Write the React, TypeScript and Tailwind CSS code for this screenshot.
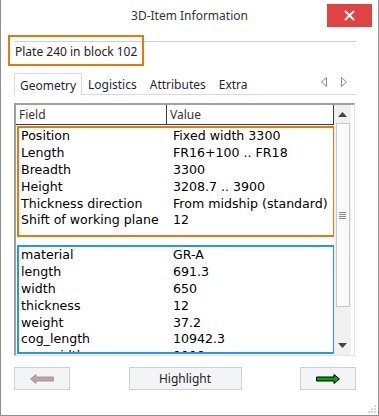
import React from "react";

const geo: [string, string][] = [
  ["Position", "Fixed width 3300"],
  ["Length", "FR16+100 .. FR18"],
  ["Breadth", "3300"],
  ["Height", "3208.7 .. 3900"],
  ["Thickness direction", "From midship (standard)"],
  ["Shift of working plane", "12"],
];

const attrs: [string, string][] = [
  ["material", "GR-A"],
  ["length", "691.3"],
  ["width", "650"],
  ["thickness", "12"],
  ["weight", "37.2"],
  ["cog_length", "10942.3"],
  ["cog_width", "9998"],
];

function Row({ f, v }: { f: string; v: string }) {
  return (
    <div className="flex h-[16.8px] shrink-0 items-center leading-[16px] whitespace-nowrap">
      <div className="w-[154px] pl-[2px]">{f}</div>
      <div>{v}</div>
    </div>
  );
}

export default function App() {
  const ui = { fontFamily: '"Noto Sans", "Open Sans", sans-serif' };
  const list = { fontFamily: '"DejaVu Sans", Verdana, sans-serif' };
  return (
    <div
      className="relative flex h-[416px] w-[379px] flex-col border-x border-b border-[#8e8e8e] bg-white text-[#1f1f3a]"
      style={ui}
    >
      {/* title bar */}
      <div className="relative flex h-[41px] shrink-0 items-start justify-center pt-[7px] text-[12px] leading-[18px] text-[#333]">
        3D-Item Information
        <div className="absolute right-[6px] top-[4px] flex h-[23px] w-[45px] items-center justify-center bg-[#e04343]">
          <svg width="11" height="11" viewBox="0 0 11 11">
            <path d="M1 1 L10 10 M10 1 L1 10" stroke="#fff" strokeWidth="2" />
          </svg>
        </div>
      </div>

      {/* header group */}
      <div className="ml-[13px] w-[342px] border-t border-[#d0d0d0] pt-[2px]">
        <div className="pl-[1px] text-[12px] leading-[16px] text-[#222]">Plate 240 in block 102</div>
      </div>
      <div className="absolute left-[7px] top-[35px] h-[31px] w-[136px] border-2 border-[#e8780c]" />

      {/* tabs */}
      <div className="ml-[13px] mt-[13px] flex h-[22px] w-[342px] items-end border-b border-[#dadada] text-[12px] leading-[16px]">
        <div className="relative -mb-[1px] flex h-[22px] w-[68px] items-center justify-center border-x border-t border-[#dadada] bg-white pt-[2px]">
          Geometry
        </div>
        <div className="ml-[6px] flex h-[21px] items-center pt-[2px]">Logistics</div>
        <div className="ml-[13px] flex h-[21px] items-center pt-[2px]">Attributes</div>
        <div className="ml-[13px] flex h-[21px] items-center pt-[2px]">Extra</div>
        <div className="ml-auto mr-[9px] flex h-[21px] items-start gap-[14px] pt-[4px]">
          <svg width="6" height="10" viewBox="0 0 6 10">
            <path d="M5.5 0.5 L0.5 5 L5.5 9.5 Z" fill="none" stroke="#8a8a8a" strokeWidth="1" />
          </svg>
          <svg width="6" height="10" viewBox="0 0 6 10">
            <path d="M0.5 0.5 L5.5 5 L0.5 9.5 Z" fill="none" stroke="#8a8a8a" strokeWidth="1" />
          </svg>
        </div>
      </div>

      {/* list view */}
      <div className="ml-[13px] mt-[8px] flex h-[253px] w-[341px] border-l-2 border-t-2 border-[#a0a0a0] border-r border-b border-r-[#e3e3e3] border-b-[#e3e3e3]">
        <div className="flex w-[318px] flex-col overflow-hidden text-[12.6px] text-black" style={list}>
          <div
            className="flex h-[20px] shrink-0 border-b border-r border-[#3a3a3a] text-[12px] leading-[19px] text-[#333]"
            style={ui}
          >
            <div className="w-[151px] border-r border-[#3a3a3a] pl-[3px]">Field</div>
            <div className="pl-[3px]">Value</div>
          </div>
          <div className="ml-[1px] mt-[1px] flex h-[111px] w-[318px] shrink-0 flex-col border-2 border-[#e8780c] pb-[6px]">
            {geo.map(([f, v]) => (
              <Row key={f} f={f} v={v} />
            ))}
          </div>
          <div className="ml-[1px] mt-[8px] flex h-[109px] w-[318px] shrink-0 flex-col overflow-hidden border-2 border-[#2196f3]">
            {attrs.map(([f, v]) => (
              <Row key={f} f={f} v={v} />
            ))}
          </div>
        </div>
        {/* scrollbar */}
        <div className="flex w-[17px] flex-col items-center bg-[#f0f0f0]">
          <div className="flex h-[18px] w-full items-center justify-center">
            <svg width="9" height="5" viewBox="0 0 9 5">
              <path d="M4.5 0 L9 5 L0 5 Z" fill="#444" />
            </svg>
          </div>
          <div className="flex h-[184px] w-[14px] items-center justify-center border border-[#c8c8c8] bg-[#f9f9f9]">
            <div className="flex flex-col gap-[1px]">
              <div className="h-[1px] w-[7px] bg-[#888]" />
              <div className="h-[1px] w-[7px] bg-[#888]" />
              <div className="h-[1px] w-[7px] bg-[#888]" />
              <div className="h-[1px] w-[7px] bg-[#888]" />
            </div>
          </div>
          <div className="flex flex-1 items-end justify-center pb-[7px]">
            <svg width="9" height="5" viewBox="0 0 9 5">
              <path d="M0 0 L9 0 L4.5 5 Z" fill="#444" />
            </svg>
          </div>
        </div>
      </div>

      {/* buttons */}
      <div className="ml-[13px] mt-[11px] flex w-[342px] items-center justify-between text-[12px]">
        <div className="flex h-[23px] w-[56px] items-center justify-center border border-[#d0d0d0] bg-[#f3f4f6]">
          <svg width="24" height="10" viewBox="0 0 24 10">
            <path
              d="M0.5 5 L6 0.5 L6 3 L23.5 3 L23.5 7 L6 7 L6 9.5 Z"
              fill="#c0a0a0"
              stroke="#a89898"
              strokeWidth="1"
            />
          </svg>
        </div>
        <div className="flex h-[23px] w-[113px] items-center justify-center border border-[#d0d0d0] bg-[#f3f4f6] text-[#222]">
          Highlight
        </div>
        <div className="flex h-[23px] w-[56px] items-center justify-center border border-[#d0d0d0] bg-[#f3f4f6]">
          <svg width="24" height="10" viewBox="0 0 24 10">
            <path
              d="M23.5 5 L18 0.5 L18 3 L0.5 3 L0.5 7 L18 7 L18 9.5 Z"
              fill="#0aa00a"
              stroke="#000"
              strokeWidth="1"
            />
          </svg>
        </div>
      </div>

      {/* resize grip */}
      <div className="absolute bottom-[2px] right-[2px] grid grid-cols-3 gap-[1px]">
        <div className="h-[2px] w-[2px]" />
        <div className="h-[2px] w-[2px]" />
        <div className="h-[2px] w-[2px] bg-[#d8d8d8]" />
        <div className="h-[2px] w-[2px]" />
        <div className="h-[2px] w-[2px] bg-[#d8d8d8]" />
        <div className="h-[2px] w-[2px] bg-[#d8d8d8]" />
        <div className="h-[2px] w-[2px] bg-[#d8d8d8]" />
        <div className="h-[2px] w-[2px] bg-[#d8d8d8]" />
        <div className="h-[2px] w-[2px] bg-[#d8d8d8]" />
      </div>
    </div>
  );
}
